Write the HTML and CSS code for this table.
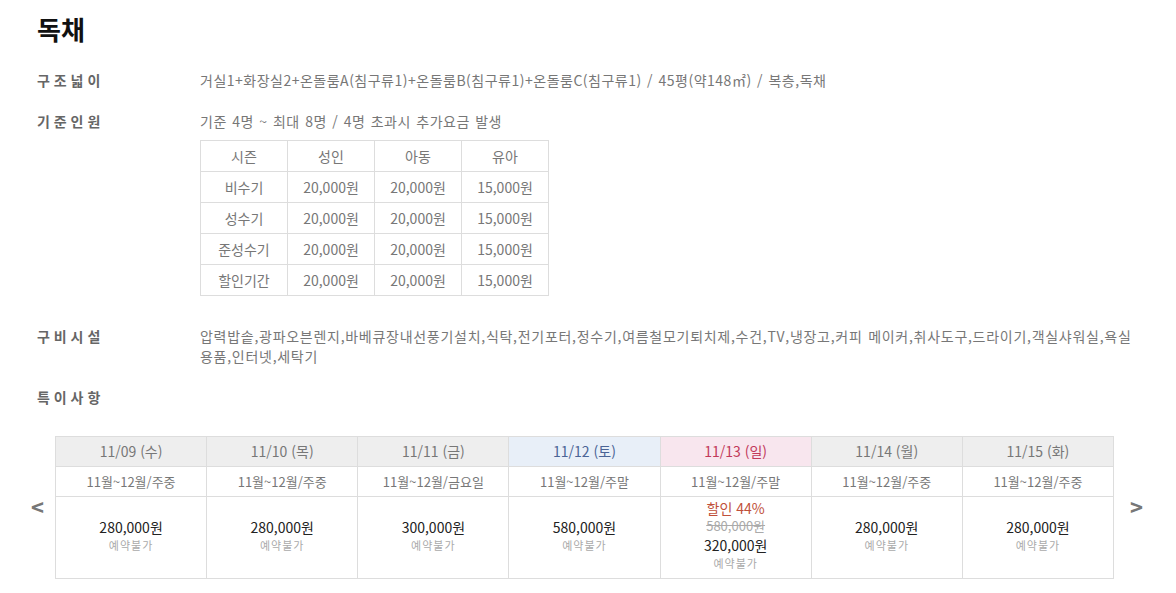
FILE: index.html
```html
<!DOCTYPE html>
<html lang="ko">
<head>
<meta charset="utf-8">
<link rel="stylesheet" href="styles.css">
</head>
<body>
<div class="page">
  <h1 class="title">독채</h1>
  <div class="info">
    <div class="row">
      <div class="label">구 조 넓 이</div>
      <div class="value">거실1+화장실2+온돌룸A(침구류1)+온돌룸B(침구류1)+온돌룸C(침구류1) / 45평(약148㎡) / 복층,독채</div>
    </div>
    <div class="row">
      <div class="label">기 준 인 원</div>
      <div class="value">
        <div>기준 4명 ~ 최대 8명 / 4명 초과시 추가요금 발생</div>
        <table class="fee">
          <tr><td>시즌</td><td>성인</td><td>아동</td><td>유아</td></tr>
          <tr><td>비수기</td><td>20,000원</td><td>20,000원</td><td>15,000원</td></tr>
          <tr><td>성수기</td><td>20,000원</td><td>20,000원</td><td>15,000원</td></tr>
          <tr><td>준성수기</td><td>20,000원</td><td>20,000원</td><td>15,000원</td></tr>
          <tr><td>할인기간</td><td>20,000원</td><td>20,000원</td><td>15,000원</td></tr>
        </table>
      </div>
    </div>
    <div class="row">
      <div class="label">구 비 시 설</div>
      <div class="value wide">압력밥솥,광파오븐렌지,바베큐장내선풍기설치,식탁,전기포터,정수기,여름철모기퇴치제,수건,TV,냉장고,커피 메이커,취사도구,드라이기,객실샤워실,욕실용품,인터넷,세탁기</div>
    </div>
    <div class="row">
      <div class="label">특 이 사 항</div>
      <div class="value"></div>
    </div>
  </div>

  <div class="cal">
    <div class="arrow left">&lt;</div>
    <div class="days">
      <div class="day">
        <div class="d-head">11/09 (수)</div>
        <div class="d-season">11월~12월/주중</div>
        <div class="d-body"><div class="price">280,000원</div><div class="status">예약불가</div></div>
      </div>
      <div class="day">
        <div class="d-head">11/10 (목)</div>
        <div class="d-season">11월~12월/주중</div>
        <div class="d-body"><div class="price">280,000원</div><div class="status">예약불가</div></div>
      </div>
      <div class="day">
        <div class="d-head">11/11 (금)</div>
        <div class="d-season">11월~12월/금요일</div>
        <div class="d-body"><div class="price">300,000원</div><div class="status">예약불가</div></div>
      </div>
      <div class="day">
        <div class="d-head sat">11/12 (토)</div>
        <div class="d-season">11월~12월/주말</div>
        <div class="d-body"><div class="price">580,000원</div><div class="status">예약불가</div></div>
      </div>
      <div class="day">
        <div class="d-head sun">11/13 (일)</div>
        <div class="d-season">11월~12월/주말</div>
        <div class="d-body">
          <div class="sale">할인 44%</div>
          <div class="orig">580,000원</div>
          <div class="price">320,000원</div>
          <div class="status">예약불가</div>
        </div>
      </div>
      <div class="day">
        <div class="d-head">11/14 (월)</div>
        <div class="d-season">11월~12월/주중</div>
        <div class="d-body"><div class="price">280,000원</div><div class="status">예약불가</div></div>
      </div>
      <div class="day">
        <div class="d-head">11/15 (화)</div>
        <div class="d-season">11월~12월/주중</div>
        <div class="d-body"><div class="price">280,000원</div><div class="status">예약불가</div></div>
      </div>
    </div>
    <div class="arrow right">&gt;</div>
  </div>
</div>
</body>
</html>
```

FILE: styles.css
```css
html, body {
  margin: 0;
  padding: 0;
  background: #fff;
}
body {
  font-family: "Noto Sans CJK KR", "Noto Sans", sans-serif;
  font-size: 14px;
  color: #777;
}
.page {
  padding: 0 0 0 37px;
}
.title {
  margin: 0;
  padding-top: 12px;
  font-size: 26px;
  line-height: 34px;
  font-weight: bold;
  color: #111;
}
.info {
  margin-top: 24px;
}
.row {
  display: flex;
  margin-bottom: 21px;
}
.label {
  width: 163px;
  flex: none;
  font-weight: bold;
  color: #666;
  line-height: 20px;
}
.value {
  line-height: 20px;
  color: #777;
  letter-spacing: 0.5px;
  word-spacing: 1px;
}
.value.wide {
  width: 935px;
  letter-spacing: 0.72px;
  word-break: break-all;
}
.fee {
  border-collapse: collapse;
  margin-top: 9px;
  margin-bottom: 9px;
  letter-spacing: 0;
  word-spacing: 0;
}
.fee td {
  border: 1px solid #ddd;
  width: 86px;
  height: 30px;
  padding: 0;
  text-align: center;
  color: #777;
  font-size: 14px;
}
.cal {
  display: flex;
  align-items: center;
  margin-left: -37px;
  margin-top: 29px;
}
.arrow {
  flex: none;
  font-size: 22px;
  color: #777;
  font-weight: bold;
  padding-bottom: 4px;
  text-align: left;
}
.arrow.left {
  padding-left: 31px;
  width: 24px;
}
.arrow.right {
  padding-left: 16px;
  width: 40px;
}
.days {
  display: flex;
  width: 1059px;
  border: 1px solid #ddd;
  box-sizing: border-box;
}
.day {
  flex: 1;
  border-left: 1px solid #ddd;
  text-align: center;
}
.day:first-child {
  border-left: none;
}
.d-head {
  height: 29px;
  line-height: 29px;
  background: #eee;
  border-bottom: 1px solid #ddd;
  color: #777;
  font-size: 14px;
}
.d-head.sat {
  background: #e8eff8;
  color: #4a6496;
}
.d-head.sun {
  background: #f8e6ee;
  color: #c2395a;
}
.d-season {
  height: 29px;
  line-height: 29px;
  border-bottom: 1px solid #ddd;
  font-size: 13px;
  color: #777;
}
.d-body {
  height: 81px;
  display: flex;
  flex-direction: column;
  justify-content: center;
  padding-bottom: 4px;
  box-sizing: border-box;
}
.price {
  color: #222;
  font-size: 14px;
  line-height: 20px;
}
.status {
  color: #aaa;
  font-size: 11px;
  letter-spacing: 1px;
  line-height: 17px;
}
.sale {
  color: #c0503a;
  font-size: 14px;
  line-height: 18px;
}
.orig {
  color: #aaa;
  font-size: 13px;
  line-height: 18px;
  text-decoration: line-through;
}
```
